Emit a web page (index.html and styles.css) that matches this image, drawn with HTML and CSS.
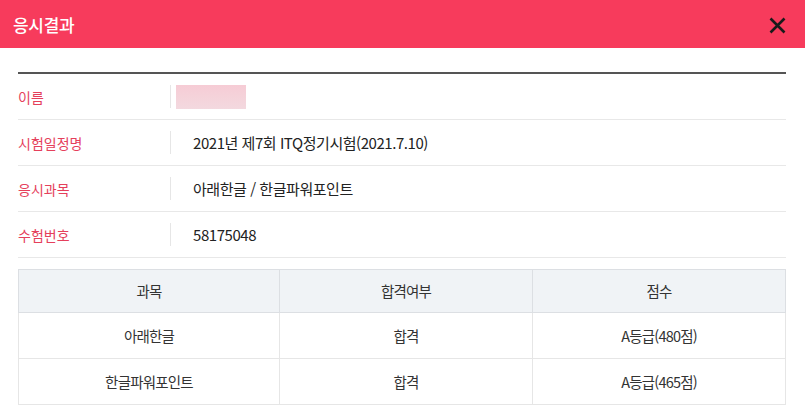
FILE: index.html
```html
<!DOCTYPE html>
<html lang="ko">
  <head>
    <meta charset="UTF-8" />
    <meta name="viewport" content="width=device-width, initial-scale=1.0" />
    <title>응시결과</title>
    <link rel="stylesheet" href="styles.css">
  </head>
  <body>
    <div class="modal">
      <div class="modal-head">
        <h1 class="modal-title">응시결과</h1>
        <span class="close-btn">
          <svg width="17" height="17" viewBox="0 0 17 17">
            <path d="M1.5 1.5 L15.5 15.5 M15.5 1.5 L1.5 15.5" stroke="#1a1a1a" stroke-width="2.6" />
          </svg>
        </span>
      </div>

      <div class="modal-body">
        <div class="info">
          <div class="info-row">
            <div class="info-label">이름</div>
            <div class="info-value"><span class="name-mask"></span></div>
          </div>
          <div class="info-row">
            <div class="info-label">시험일정명</div>
            <div class="info-value">2021년 제7회 ITQ정기시험(2021.7.10)</div>
          </div>
          <div class="info-row">
            <div class="info-label">응시과목</div>
            <div class="info-value">아래한글 / 한글파워포인트</div>
          </div>
          <div class="info-row">
            <div class="info-label">수험번호</div>
            <div class="info-value">58175048</div>
          </div>
        </div>

        <table class="result">
          <thead>
            <tr>
              <th>과목</th>
              <th>합격여부</th>
              <th>점수</th>
            </tr>
          </thead>
          <tbody>
            <tr>
              <td>아래한글</td>
              <td>합격</td>
              <td>A등급(480점)</td>
            </tr>
            <tr>
              <td>한글파워포인트</td>
              <td>합격</td>
              <td>A등급(465점)</td>
            </tr>
          </tbody>
        </table>
      </div>
    </div>
  </body>
</html>
```

FILE: styles.css
```css
body {
  margin: 0;
  padding: 0;
  background-color: #fff;
  font-family: "Noto Sans CJK KR", "Noto Sans", sans-serif;
  color: #222;
}

.modal {
  width: 805px;
}

.modal-head {
  height: 48px;
  background-color: #f73b5c;
  display: flex;
  align-items: center;
  justify-content: space-between;
  padding: 0 19px 0 13px;
}

.modal-title {
  margin: 0;
  font-size: 17px;
  font-weight: 500;
  color: #fff;
  letter-spacing: -0.3px;
}

.close-btn {
  display: flex;
  margin-top: 2px;
}

.modal-body {
  padding: 24px 19px 0 18px;
}

.info {
  border-top: 2px solid #555;
}

.info-row {
  display: flex;
  align-items: center;
  height: 45px;
  border-bottom: 1px solid #e8e8e8;
}

.info-label {
  width: 152px;
  padding-top: 1px;
  font-size: 14px;
  color: #e5405b;
  border-right: 1px solid #e6e6e6;
  line-height: 22px;
}

.info-value {
  padding-left: 22px;
  font-size: 15px;
  color: #222;
  letter-spacing: -0.45px;
}

.name-mask {
  display: block;
  width: 70px;
  height: 24px;
  margin-left: -17px;
  background: linear-gradient(180deg, #f6ccd5, #f3d9df);
}

.result {
  width: 100%;
  margin-top: 11px;
  table-layout: fixed;
  border-collapse: collapse;
  font-size: 14.5px;
  letter-spacing: -0.8px;
  line-height: 20px;
  color: #333;
}

.result th {
  height: 42px;
  padding: 0;
  background-color: #f0f3f6;
  font-weight: 400;
  border: 1px solid #dcdfe3;
}

.result td {
  height: 45px;
  padding: 0;
  text-align: center;
  border: 1px solid #e6e6e6;
}

.result th:nth-child(1) {
  width: 260px;
}

.result th:nth-child(2) {
  width: 252px;
}
```
